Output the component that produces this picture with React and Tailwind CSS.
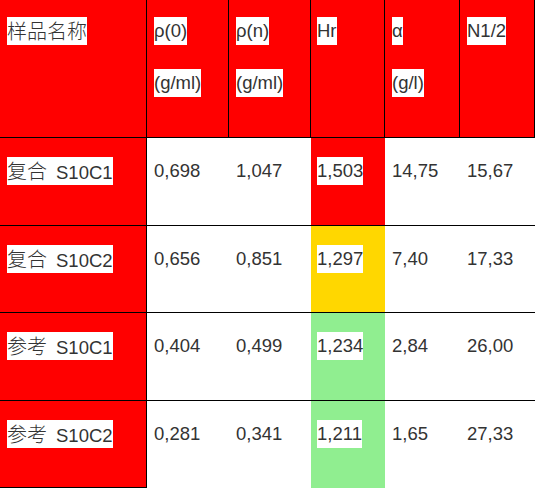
const COLS = ['w-[147px]', 'w-[82px]', 'w-[82px]', 'w-[74px]', 'w-[75px]', 'w-[75px]'];

const HEADER = [
  { lines: [{ cjk: '样品名称' }] },
  { lines: [{ text: 'ρ(0)' }, { text: '(g/ml)' }] },
  { lines: [{ text: 'ρ(n)' }, { text: '(g/ml)' }] },
  { lines: [{ text: 'Hr' }], pad: 'pl-[6px]' },
  { lines: [{ text: 'α' }, { text: '(g/l)' }] },
  { lines: [{ text: 'N1/2' }] },
];

const ROWS = [
  { cjk: '复合', code: 'S10C1', vals: ['0,698', '1,047', '1,503', '14,75', '15,67'], hr: 'bg-[#ff0000]', h: 'h-[88px]' },
  { cjk: '复合', code: 'S10C2', vals: ['0,656', '0,851', '1,297', '7,40', '17,33'], hr: 'bg-[#ffd700]', h: 'h-[87px]' },
  { cjk: '参考', code: 'S10C1', vals: ['0,404', '0,499', '1,234', '2,84', '26,00'], hr: 'bg-[#90ee90]', h: 'h-[88px]' },
  { cjk: '参考', code: 'S10C2', vals: ['0,281', '0,341', '1,211', '1,65', '27,33'], hr: 'bg-[#90ee90]', h: 'h-[87px]', last: true },
];

// white highlight behind the text, like the source doc
function Mark({ children }) {
  return <span className="inline-block h-[28px] leading-[28px] bg-white whitespace-nowrap">{children}</span>;
}

function Cjk({ children }) {
  return <span className="text-[20px] font-['Noto_Sans_CJK_SC',sans-serif] font-light">{children}</span>;
}

export default function App() {
  return (
    <div className="w-[552px] h-[496px] bg-white text-[18.5px] text-[#333] font-['Liberation_Sans','Noto_Sans_CJK_SC',sans-serif]">
      {/* header */}
      <div className="flex w-[535px] h-[138px] border-b border-black bg-[#ff0000]">
        {HEADER.map((c, i) => (
          <div key={i} className={`${COLS[i]} h-full border-r border-black pt-[17px] ${c.pad || 'pl-[7px]'} flex flex-col gap-[24px]`}>
            {c.lines.map((l, j) => (
              <div key={j} className="h-[28px]">
                <Mark>{l.cjk ? <Cjk>{l.cjk}</Cjk> : l.text}</Mark>
              </div>
            ))}
          </div>
        ))}
      </div>

      {/* body */}
      {ROWS.map((r, i) => (
        <div key={i} className={`flex w-[535px] ${r.h} ${r.last ? '' : 'border-b border-black'}`}>
          <div className={`${COLS[0]} h-full bg-[#ff0000] border-r border-black pt-[19px] pl-[7px] ${r.last ? 'border-b' : ''}`}>
            <Mark>
              <Cjk>{r.cjk}</Cjk>
              <span className="inline-block w-[9px]" />
              {r.code}
            </Mark>
          </div>
          {r.vals.map((v, j) => (
            <div
              key={j}
              className={`${COLS[j + 1]} h-full pt-[19px] ${j === 2 ? `${r.hr} pl-[6px]` : 'pl-[7px]'}`}
            >
              {j === 2 ? <Mark>{v}</Mark> : <span className="inline-block h-[28px] leading-[28px]">{v}</span>}
            </div>
          ))}
        </div>
      ))}
    </div>
  );
}
